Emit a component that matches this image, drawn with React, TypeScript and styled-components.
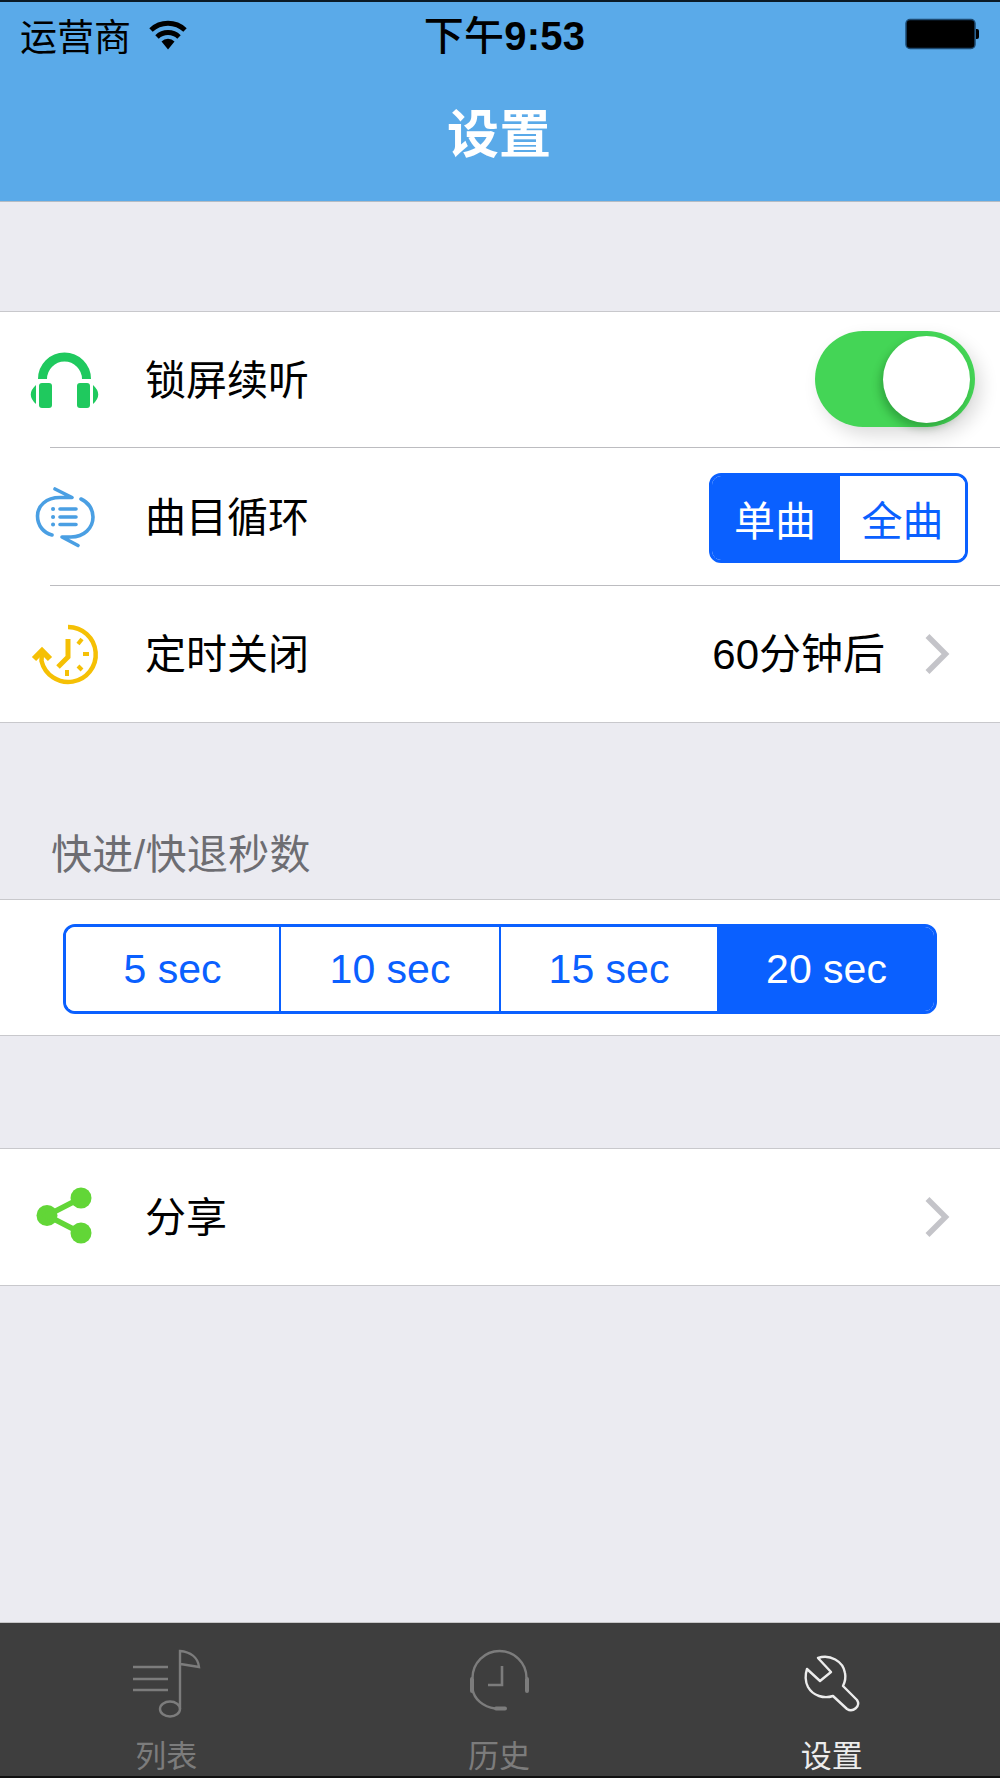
import React from "react";
import styled, { createGlobalStyle } from "styled-components";

const Global = createGlobalStyle`
  html, body { margin: 0; padding: 0; background: #000; }
  * { box-sizing: border-box; }
`;

const FONT = `"Liberation Sans", "Noto Sans CJK SC", sans-serif`;

const Page = styled.div`
  width: 1000px;
  height: 1778px;
  display: flex;
  flex-direction: column;
  background: #ebebf1;
  font-family: ${FONT};
  border-top: 2px solid #0b1a26;
  overflow: hidden;
`;

const Header = styled.header`
  height: 200px;
  flex: none;
  background: #5aaae9;
  border-bottom: 1px solid #b4bcc4;
  display: flex;
  flex-direction: column;
`;

const StatusBar = styled.div`
  height: 62px;
  flex: none;
  display: grid;
  grid-template-columns: 1fr auto 1fr;
  align-items: center;
  padding: 0 21px 0 20px;
  color: #000;
`;

const StatusLeft = styled.div`
  display: flex;
  align-items: center;
  gap: 18px;
  font-size: 37px;
`;

const Time = styled.div`
  font-size: 40px;
  font-weight: 700;
  line-height: 62px;
  padding: 3px 0 0 10px;
  letter-spacing: 0.2px;
`;

const TimeCjk = styled.span`
  font-weight: 500;
`;

const BatteryWrap = styled.div`
  justify-self: end;
  display: flex;
  align-items: center;
  margin-top: -2px;
`;

const Title = styled.h1`
  margin: 0;
  flex: 1;
  display: flex;
  align-items: center;
  justify-content: center;
  color: #fff;
  font-size: 52px;
  font-weight: 700;
  padding: 0 2px 5px 0;
`;

const Section = styled.section<{ $gap: number }>`
  margin-top: ${(p) => p.$gap}px;
  background: #fff;
  border-top: 1px solid #c8c8cc;
  border-bottom: 1px solid #c8c8cc;
  flex: none;
`;

const Row = styled.div<{ $h: number }>`
  height: ${(p) => p.$h}px;
  display: flex;
  align-items: center;
  font-size: 41px;
  color: #000;
`;

const IconSlot = styled.div`
  width: 145px;
  flex: none;
  padding-left: 30px;
  display: flex;
  align-items: center;
`;

const Label = styled.div`
  flex: 1;
  line-height: 1;
  padding-top: 3px;
`;

const Separator = styled.div`
  height: 1px;
  margin-left: 50px;
  background: #bcbcc0;
`;

const Toggle = styled.div`
  width: 160px;
  height: 96px;
  margin-right: 25px;
  margin-top: -1px;
  border-radius: 48px;
  background: #44d556;
  display: flex;
  align-items: center;
  justify-content: flex-end;
  padding-right: 5px;
  box-shadow: 6px 8px 18px rgba(0, 0, 0, 0.14);
`;

const Knob = styled.div`
  width: 87px;
  height: 87px;
  border-radius: 50%;
  background: #fff;
  box-shadow: -3px 5px 8px rgba(0, 60, 10, 0.3);
`;

const Segments = styled.div<{ $w: number; $mr: number }>`
  width: ${(p) => p.$w}px;
  height: 90px;
  margin: 2px ${(p) => p.$mr}px 0 0;
  display: flex;
  border: 3px solid #0a60ff;
  border-radius: 12px;
  overflow: hidden;
`;

const Seg = styled.div<{ $on?: boolean; $w: number; $dy?: number }>`
  flex: 0 0 ${(p) => p.$w}px;
  display: flex;
  align-items: center;
  justify-content: center;
  font-size: 41px;
  padding-top: ${(p) => p.$dy ?? 0}px;
  background: ${(p) => (p.$on ? "#0a60ff" : "#fff")};
  color: ${(p) => (p.$on ? "#fff" : "#0a60ff")};
  & + & {
    border-left: 2px solid #0a60ff;
  }
`;

const Value = styled.div`
  font-size: 42px;
  line-height: 1;
  margin-right: 39px;
  padding-top: 2px;
`;

const ChevronSlot = styled.div`
  width: 48px;
  margin-right: 28px;
  display: flex;
  justify-content: flex-start;
`;

const SectionTitle = styled.div`
  height: 176px;
  flex: none;
  display: flex;
  align-items: flex-end;
  padding: 0 0 22px 51px;
  font-size: 41px;
  line-height: 44px;
  letter-spacing: 0.35px;
  color: #6d6d72;
`;

const SegRow = styled.div`
  height: 135px;
  display: flex;
  align-items: center;
  justify-content: center;
`;

const Filler = styled.div`
  flex: 1;
`;

const TabBar = styled.nav`
  height: 156px;
  flex: none;
  background: #3e3e3e;
  border-top: 1px solid #c6c6c8;
  display: grid;
  grid-template-columns: repeat(3, 1fr);
  padding: 23px 2px 0 0;
  box-shadow: inset 0 -2px 0 #111;
`;

const Tab = styled.div<{ $on?: boolean }>`
  display: flex;
  flex-direction: column;
  align-items: center;
  color: ${(p) => (p.$on ? "#ececec" : "#7c7c7c")};
  font-size: 31px;
  line-height: 36px;
`;

const TabText = styled.div`
  margin-top: 21px;
`;

const Headphones = () => (
  <svg width="70" height="64" viewBox="30 347 70 64">
    <path d="M42.5 378A22 22 0 0 1 86.5 378" fill="none" stroke="#1fc95e" strokeWidth="9" />
    <rect x="39" y="382" width="13" height="25" rx="3" fill="#1fc95e" />
    <rect x="77" y="382" width="13" height="25" rx="3" fill="#1fc95e" />
    <path d="M36 384Q25.500 393.500 36 403ZM93 384Q103.500 393.500 93 403Z" fill="#1fc95e" />
  </svg>
);

const LoopIcon = () => (
  <svg width="70" height="64" viewBox="30 485 70 64">
    <g fill="none" stroke="#4a9fe3" strokeWidth="3.6" strokeLinecap="round" strokeLinejoin="round">
      <path d="M55 489L72 497.500H60C46 497.500 37.500 506 37.500 516C37.500 526 44 533 52 535" />
      <path d="M81 499C88 502 93 509 93 517C93 528 84 537 71 537H62L78 545.500" />
      <path d="M60 509H76M60 517H76M60 524.500H76" />
    </g>
    <path d="M53 509h.1M53 517h.1M53 524.500h.1" stroke="#4a9fe3" strokeWidth="4" strokeLinecap="round" />
  </svg>
);

const TimerIcon = () => (
  <svg width="70" height="64" viewBox="30 622 70 64">
    <g fill="none" stroke="#f5c005" strokeWidth="4.5">
      <path d="M68 627A27.500 27.500 0 1 1 41.500 661L42 651" />
      <path d="M68 639V657L58 667" strokeWidth="5" />
      <path d="M78 644L82 639M83 654H89M78 666L82 670M67 670V676" strokeWidth="4" />
      <path d="M34 659L42 651L50 659" strokeWidth="6" />
    </g>
  </svg>
);

const ShareIcon = () => (
  <svg width="70" height="64" viewBox="30 1185 70 64">
    <g fill="#62d637">
      <circle cx="81" cy="1198" r="10.500" />
      <circle cx="81" cy="1233" r="10.500" />
      <circle cx="47" cy="1215.500" r="10.500" />
    </g>
    <path d="M81 1198L47 1215.500L81 1233" fill="none" stroke="#62d637" strokeWidth="5.500" />
  </svg>
);

const Chevron = () => (
  <svg width="26" height="44" viewBox="0 0 26 44">
    <path d="M3.500 4L21.500 22L3.500 40" fill="none" stroke="#c4c4c9" strokeWidth="5.500" />
  </svg>
);

const Wifi = () => (
  <svg width="38" height="30" viewBox="150 17 38 30">
    <path d="M152 27A25 25 0 0 1 186 27" fill="none" stroke="#000" strokeWidth="5" />
    <path d="M158 34A16 16 0 0 1 180 34" fill="none" stroke="#000" strokeWidth="5" />
    <path d="M162.500 38.500A9 9 0 0 1 175.500 38.500L169 46.500Z" fill="#000" />
  </svg>
);

const Battery = () => (
  <svg width="74" height="32" viewBox="906 16 74 32">
    <rect x="907" y="17.500" width="69" height="29" rx="4" fill="#000" stroke="#1d4a72" strokeWidth="1.500" />
    <path d="M977 27h1a2 2 0 0 1 2 2v6a2 2 0 0 1-2 2h-1Z" fill="#000" />
  </svg>
);

const NoteTab = () => (
  <svg width="80" height="72" viewBox="126 1645 80 72">
    <g fill="none" stroke="#7c7c7c" strokeWidth="2.400">
      <path d="M133 1666H168M133 1678H168M133 1689H168" />
      <path d="M180 1708V1650C190 1651 198 1656 199 1666L180.500 1663" />
      <ellipse cx="170" cy="1708" rx="10" ry="7.500" />
    </g>
  </svg>
);

const ClockTab = () => (
  <svg width="80" height="72" viewBox="458 1645 80 72">
    <g fill="none" stroke="#7c7c7c">
      <path d="M471.500 1677A27 27 0 0 1 525.500 1677" strokeWidth="2.400" />
      <path d="M471.500 1688C473 1698 482 1706 494 1707.500" strokeWidth="2.400" />
      <path d="M471 1678V1690M526 1678V1690M495 1707.500H504" strokeWidth="4" strokeLinecap="round" />
      <path d="M501 1665V1684H487" strokeWidth="2.600" />
    </g>
  </svg>
);

const WrenchTab = () => (
  <svg width="80" height="72" viewBox="792 1645 80 72">
    <path
      d="M818 1657C830 1653 843 1660 845 1672C846 1677 845 1681 843 1685L857 1699C861 1705 853 1712 847 1708L833 1695C824 1698 813 1695 808 1686C805 1680 805 1674 807 1668L820 1680L831 1671Z"
      fill="none"
      stroke="#ececec"
      strokeWidth="2.400"
      strokeLinejoin="round"
    />
  </svg>
);

const seconds = [
  { text: "5 sec", w: 213 },
  { text: "10 sec", w: 220 },
  { text: "15 sec", w: 218 },
  { text: "20 sec", w: 217, on: true },
];

export default function App() {
  return (
    <Page>
      <Global />
      <Header>
        <StatusBar>
          <StatusLeft>
            运营商
            <Wifi />
          </StatusLeft>
          <Time>
            <TimeCjk>下午</TimeCjk>9:53
          </Time>
          <BatteryWrap>
            <Battery />
          </BatteryWrap>
        </StatusBar>
        <Title>设置</Title>
      </Header>

      <Section $gap={109}>
        <Row $h={135}>
          <IconSlot>
            <Headphones />
          </IconSlot>
          <Label>锁屏续听</Label>
          <Toggle>
            <Knob />
          </Toggle>
        </Row>
        <Separator />
        <Row $h={137}>
          <IconSlot>
            <LoopIcon />
          </IconSlot>
          <Label>曲目循环</Label>
          <Segments $w={259} $mr={32}>
            <Seg $on $w={126}>单曲</Seg>
            <Seg $w={127}>全曲</Seg>
          </Segments>
        </Row>
        <Separator />
        <Row $h={136}>
          <IconSlot>
            <TimerIcon />
          </IconSlot>
          <Label>定时关闭</Label>
          <Value>60分钟后</Value>
          <ChevronSlot>
            <Chevron />
          </ChevronSlot>
        </Row>
      </Section>

      <SectionTitle>快进/快退秒数</SectionTitle>

      <Section $gap={0}>
        <SegRow>
          <Segments $w={874} $mr={0}>
            {seconds.map((s) => (
              <Seg key={s.text} $on={s.on} $w={s.w} $dy={1}>
                {s.text}
              </Seg>
            ))}
          </Segments>
        </SegRow>
      </Section>

      <Section $gap={112}>
        <Row $h={136}>
          <IconSlot>
            <ShareIcon />
          </IconSlot>
          <Label>分享</Label>
          <ChevronSlot>
            <Chevron />
          </ChevronSlot>
        </Row>
      </Section>

      <Filler />

      <TabBar>
        <Tab>
          <NoteTab />
          <TabText>列表</TabText>
        </Tab>
        <Tab>
          <ClockTab />
          <TabText>历史</TabText>
        </Tab>
        <Tab $on>
          <WrenchTab />
          <TabText>设置</TabText>
        </Tab>
      </TabBar>
    </Page>
  );
}
